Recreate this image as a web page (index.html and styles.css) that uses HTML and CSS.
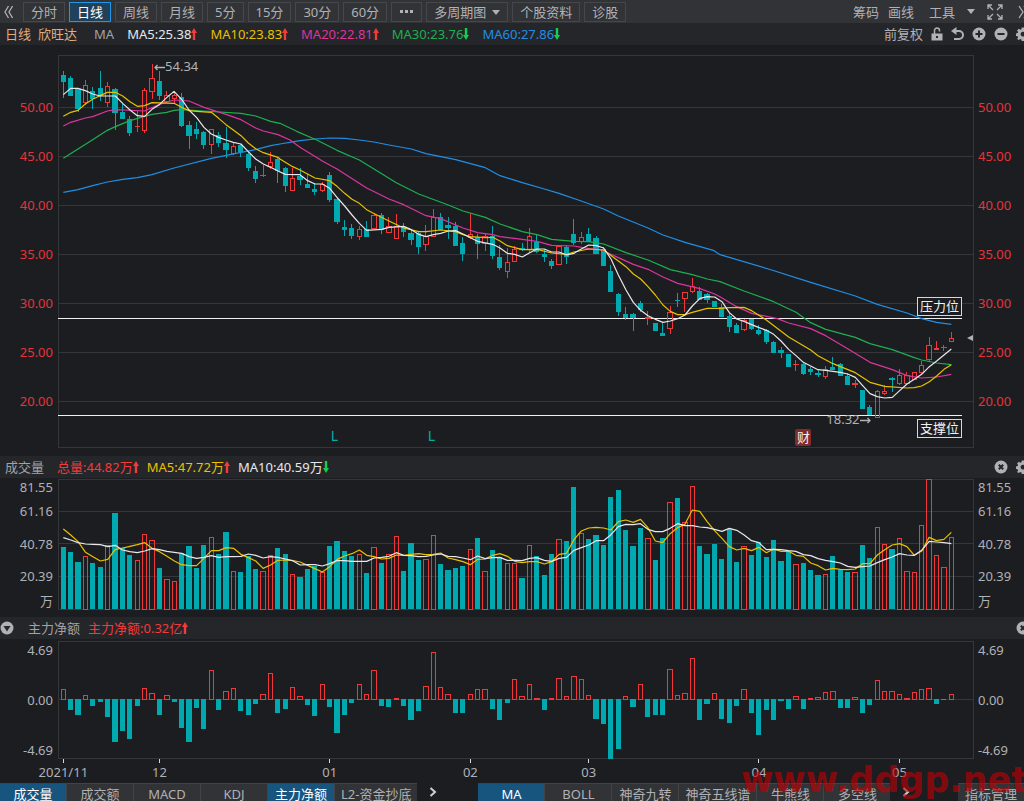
FILE: index.html
```html
<!DOCTYPE html>
<html lang="zh-CN">
<head>
<meta charset="utf-8">
<meta name="viewport" content="width=device-width, initial-scale=1">
<title>欣旺达 日线</title>
<link rel="stylesheet" href="styles.css">
<script src="chart.js" defer></script>
</head>
<body>
<svg class="defs" aria-hidden="true">
  <symbol id="up" viewBox="0 0 6 13"><path d="M3 0L6 5H4.2V12H1.8V5H0Z"/></symbol>
  <symbol id="down" viewBox="0 0 6 13"><path d="M3 12L6 7H4.2V0H1.8V7H0Z"/></symbol>
  <symbol id="gear" viewBox="0 0 14 14"><path fill-rule="evenodd" d="M5.8 0.5h2.4l.4 1.8 1.1.5 1.6-1 1.6 1.6-1 1.6.5 1.1 1.8.4v1.9l-1.8.4-.5 1.1 1 1.6-1.6 1.6-1.6-1-1.1.5-.4 1.8H5.8l-.4-1.8-1.1-.5-1.6 1L1.1 12l1-1.6-.5-1.1L0 8.900V6.500l1.600-.4.5-1.100-1-1.600L2.700 1.800l1.600 1 1.100-.5ZM7 4.700a2.400 2.400 0 1 0 .01 0Z"/></symbol>
  <symbol id="close" viewBox="0 0 14 14"><circle cx="7" cy="7" r="6.500"/><path class="cut" d="M4.800 4.800L9.200 9.200M9.200 4.800L4.800 9.200"/></symbol>
</svg>

<nav class="toolbar">
  <button class="plain" aria-label="收起"><svg width="9" height="14" viewBox="0 0 9 14" class="line"><path d="M4.500 1L1 7L4.500 13M8.500 1L5 7L8.500 13"/></svg></button>
  <div class="periods">
    <button>分时</button>
    <button class="on">日线</button>
    <button>周线</button>
    <button>月线</button>
    <button>5分</button>
    <button>15分</button>
    <button>30分</button>
    <button>60分</button>
    <button class="more" aria-label="更多"><svg width="13" height="3" viewBox="0 0 13 3"><path d="M0 0h3v3H0zM5 0h3v3H5zM10 0h3v3h-3z"/></svg></button>
    <button>多周期图<svg class="caret" width="8" height="5" viewBox="0 0 8 5"><path d="M0 0H8L4 5Z"/></svg></button>
    <button>个股资料</button>
    <button>诊股</button>
  </div>
  <div class="tools">
    <button class="plain">筹码</button>
    <button class="plain">画线</button>
    <button class="plain tool-menu">工具<svg width="8" height="5" viewBox="0 0 8 5"><path d="M0 0H8L4 5Z"/></svg></button>
    <button class="plain expand" aria-label="全屏"><svg width="16" height="16" viewBox="0 0 16 16" class="line"><path d="M1 5V1H5M1 1L6 6M11 1H15V5M15 1L10 6M1 11V15H5M1 15L6 10M11 15H15V11M15 15L10 10"/></svg></button>
    <button class="plain edge" aria-label="展开"><svg width="12" height="14" viewBox="0 0 12 14" class="line"><path d="M1 1L5 7L1 13M6 1L10 7L6 13"/></svg></button>
  </div>
</nav>

<header class="bar">
  <span class="peach">日线</span>
  <span class="peach">欣旺达</span>
  <span class="grey ma">MA</span>
  <div class="values">
    <span class="white">MA5:25.38<svg class="arrow red"><use href="#up"/></svg></span>
    <span class="yellow">MA10:23.83<svg class="arrow red"><use href="#up"/></svg></span>
    <span class="magenta">MA20:22.81<svg class="arrow red"><use href="#up"/></svg></span>
    <span class="green">MA30:23.76<svg class="arrow lime"><use href="#down"/></svg></span>
    <span class="blue">MA60:27.86<svg class="arrow lime"><use href="#down"/></svg></span>
  </div>
  <div class="actions">
    <button class="plain">前复权</button>
    <button class="plain" aria-label="锁定"><svg width="12" height="14" viewBox="0 0 12 14"><path d="M3.500 7V3.500a2.500 2.500 0 0 1 5 0V4.500" fill="none" stroke="currentColor" stroke-width="1.500"/><path fill-rule="evenodd" d="M0.500 6.500h11v7h-11zM5 9v2h2V9z"/></svg></button>
    <button class="plain" aria-label="撤销"><svg width="13" height="14" viewBox="0 0 13 14"><path d="M4 4H8a4 4 0 0 1 0 8H3" fill="none" stroke="currentColor" stroke-width="2"/><path d="M0 4L5.500 0V8Z"/></svg></button>
    <button class="plain" aria-label="放大"><svg width="14" height="14" viewBox="0 0 14 14"><circle cx="7" cy="7" r="6.500"/><path class="cut" d="M7 3.500V10.500M3.500 7H10.500"/></svg></button>
    <button class="plain" aria-label="缩小"><svg width="14" height="14" viewBox="0 0 14 14"><circle cx="7" cy="7" r="6.500"/><path class="cut" d="M3.500 7H10.500"/></svg></button>
    <button class="plain" aria-label="设置"><svg width="14" height="14"><use href="#gear"/></svg></button>
  </div>
</header>

<section class="row price">
  <div class="axis left"><span>50.00</span><span>45.00</span><span>40.00</span><span>35.00</span><span>30.00</span><span>25.00</span><span>20.00</span></div>
  <div class="plot">
    <svg id="price" viewBox="0 0 2745 1176" preserveAspectRatio="none" role="img" aria-label="日线K线图"></svg>
    <span class="note high"><svg width="11" height="7" viewBox="0 0 11 7" class="line"><path d="M11 3.500H1M3.500 1L1 3.500L3.500 6"/></svg>54.34</span>
    <span class="note low">18.32<svg width="11" height="7" viewBox="0 0 11 7" class="line"><path d="M0 3.500H10M7.500 1L10 3.500L7.500 6"/></svg></span>
    <span class="note mark first">L</span>
    <span class="note mark second">L</span>
    <span class="note report">财</span>
    <span class="note level resist">压力位</span>
    <span class="note level support">支撑位</span>
    <svg class="note pointer" width="6" height="6" viewBox="0 0 6 6"><path d="M0 3L6 0V6Z"/></svg>
  </div>
  <div class="axis right"><span>50.00</span><span>45.00</span><span>40.00</span><span>35.00</span><span>30.00</span><span>25.00</span><span>20.00</span></div>
</section>

<header class="bar">
  <span class="grey volume-name">成交量</span>
  <div class="values tight">
    <span class="red">总量:44.82万<svg class="arrow red"><use href="#up"/></svg></span>
    <span class="yellow">MA5:47.72万<svg class="arrow red"><use href="#up"/></svg></span>
    <span class="white">MA10:40.59万<svg class="arrow lime"><use href="#down"/></svg></span>
  </div>
  <div class="actions">
    <button class="plain" aria-label="关闭"><svg width="14" height="14"><use href="#close"/></svg></button>
    <button class="plain" aria-label="设置"><svg width="14" height="14"><use href="#gear"/></svg></button>
  </div>
</header>

<section class="row volume">
  <div class="axis left"><span>81.55</span><span>61.16</span><span>40.78</span><span>20.39</span><span>万</span></div>
  <div class="plot"><svg id="volume" viewBox="0 0 2745 390" preserveAspectRatio="none" role="img" aria-label="成交量"></svg></div>
  <div class="axis right"><span>81.55</span><span>61.16</span><span>40.78</span><span>20.39</span><span>万</span></div>
</section>

<header class="bar flow-bar">
  <button class="plain" aria-label="切换指标"><svg width="14" height="14" viewBox="0 0 14 14"><circle cx="7" cy="7" r="6.500"/><path class="hole" d="M3.500 5H10.500L7 10.500Z"/></svg></button>
  <span class="grey">主力净额</span>
  <span class="red">主力净额:0.32亿<svg class="arrow red"><use href="#up"/></svg></span>
  <div class="actions">
    <button class="plain" aria-label="关闭"><svg width="14" height="14"><use href="#close"/></svg></button>
  </div>
</header>

<section class="row flow">
  <div class="axis left"><span>4.69</span><span>0.00</span><span>-4.69</span></div>
  <div class="plot"><svg id="flow" viewBox="0 0 2745 351" preserveAspectRatio="none" role="img" aria-label="主力净额"></svg></div>
  <div class="axis right"><span>4.69</span><span>0.00</span><span>-4.69</span></div>
</section>
<div class="row dates"><svg id="dates" role="img" aria-label="日期"></svg></div>

<footer class="tabs">
  <div class="group">
    <button class="on">成交量</button>
    <button>成交额</button>
    <button>MACD</button>
    <button>KDJ</button>
    <button class="on">主力净额</button>
    <button class="wide">L2-资金抄底</button>
  </div>
  <button class="next" aria-label="更多副图指标"><svg width="8" height="10" viewBox="0 0 8 10"><path d="M1.500 1L6 5L1.500 9"/></svg></button>
  <div class="group main-tabs">
    <button class="on">MA</button>
    <button>BOLL</button>
    <button>神奇九转</button>
    <button class="wide">神奇五线谱</button>
    <button>牛熊线</button>
    <button>多空线</button>
  </div>
  <button class="next" aria-label="更多主图指标"><svg width="8" height="10" viewBox="0 0 8 10"><path d="M1.500 1L6 5L1.500 9"/></svg></button>
  <div class="group manage"><button>指标管理</button></div>
</footer>
<div class="watermark">www.ddgp.net</div>
</body>
</html>
```
FILE: styles.css
```css
* { box-sizing: border-box; }

body {
  margin: 0;
  min-height: 100vh;
  position: relative;
  overflow: hidden;
  display: flex;
  flex-direction: column;
  background: #1c1d21;
  color: #b0b1b4;
  font: 13px/20px "Noto Sans", "Noto Sans CJK SC", sans-serif;
  white-space: nowrap;
}

button {
  margin: 0;
  padding: 0;
  border: 0;
  background: none;
  color: inherit;
  font: inherit;
  white-space: nowrap;
}

svg { fill: currentColor; }
.defs { position: absolute; width: 0; height: 0; }
.line { fill: none; stroke: currentColor; stroke-width: 1.3; }
.cut { fill: none; stroke: #25262a; stroke-width: 2; }
.hole { fill: #25262a; }
.plain { display: flex; align-items: center; flex: none; }

.white { color: #e8e8ea; }
.grey { color: #a2a3a7; }
.peach { color: #e5ad7c; }
.yellow { color: #e8c100; }
.magenta { color: #dc359f; }
.green { color: #1cb04f; }
.blue { color: #1f8fe6; }
.red { color: #f53a3a; }
.lime { color: #12cf52; }

/* Period toolbar */
.toolbar {
  display: flex;
  align-items: center;
  flex: none;
  height: 23px;
  padding-left: 4px;
  background: #323337;
}
.periods { display: flex; gap: 4px; margin-left: 10px; }
.periods button {
  height: 20px;
  padding: 0 7px;
  border: 1px solid #46474b;
  line-height: 18px;
}
.periods .on { background: #20415a; border-color: #2196e8; color: #fff; }
.periods .more { padding: 0 8px; }
.periods .more svg { display: block; }
.caret { margin: 0 0 2px 6px; }
.tools { display: flex; align-items: center; margin-left: auto; gap: 9px; }
.tool-menu { gap: 12px; margin-left: 6px; }
.expand { margin-left: 3px; }
.edge { margin: 0 -6px 0 6px; }

/* Indicator bars */
.bar {
  display: flex;
  align-items: center;
  flex: none;
  height: 22px;
  padding-left: 5px;
  background: #25262a;
  gap: 7px;
}
.ma { margin-left: 10px; }
.values { display: flex; gap: 13px; margin-left: 6px; }
.values.tight { gap: 8px; }
.arrow { width: 6px; height: 13px; vertical-align: -2px; }
.actions { display: flex; gap: 8px; margin: 0 -6px 0 auto; }
.flow-bar { padding-left: 0; gap: 8px; }
.flow-bar > .plain { margin-right: 6px; }

/* Charts */
.row {
  display: grid;
  grid-template-columns: 58px minmax(0, 1fr) 51px;
  flex: none;
}
.price { padding: 10px 0 9px; }
.volume { padding: 1px 0 8px; }
.flow { padding-top: 2px; }
.plot { position: relative; }
.plot > svg:first-child { display: block; width: 100%; overflow: visible; }
#price { height: 392px; }
#volume { height: 130px; }
#flow { height: 117px; }

.axis { display: grid; align-content: start; }
.axis.left { padding-right: 5px; text-align: right; }
.axis.right { padding-left: 5px; }
.price .axis { grid-auto-rows: 49px; line-height: 49px; padding-top: 28px; color: #e5343a; }
.volume .axis { grid-template-rows: 16px 32px 33px 32px 17px; align-items: center; }
.flow .axis { grid-template-rows: 17px 84px 16px; align-items: center; }

.dates { height: 25px; }
#dates { grid-column: 2; width: 100%; height: 25px; overflow: visible; }
#dates line { stroke: #d8d8da; stroke-width: 1; shape-rendering: crispEdges; }

#price *, #volume *, #flow * { vector-effect: non-scaling-stroke; }
.grid { stroke: #35363a; shape-rendering: crispEdges; fill: none; }
.rise { stroke: #f0383a; fill: none; shape-rendering: crispEdges; }
.fall { stroke: none; fill: #00a8b0; shape-rendering: crispEdges; }
.wick { stroke: #00a8b0; shape-rendering: crispEdges; }
.wick.up { stroke: #f0383a; }
.level-line { stroke: #f0f0f2; shape-rendering: crispEdges; }
.curve { fill: none; stroke: currentColor; stroke-width: 1.2; stroke-linejoin: round; }

/* Annotations over the price plot */
.note { position: absolute; line-height: 18px; }
.high { left: 10.5%; top: 2px; }
.low { right: 11.2%; top: 355px; }
.mark { top: 372px; font-size: 14px; color: #00b0a8; }
.first { left: 29.8%; }
.second { left: 40.4%; }
.report {
  left: 80.6%;
  top: 374px;
  width: 16px;
  height: 17px;
  border-radius: 2px;
  background: #7f2a2d;
  color: #f0f0f2;
  text-align: center;
  line-height: 16px;
}
.level {
  right: 11px;
  height: 19px;
  padding: 0 2px;
  border: 1px solid #d8d8da;
  background: #1c1d21;
  color: #f0f0f2;
  line-height: 17px;
}
.resist { top: 242px; }
.support { top: 364px; }
.pointer { right: 0; top: 280px; }

/* Indicator tabs */
.tabs {
  display: flex;
  flex: none;
  height: 18px;
  background: #1c1d21;
  line-height: 20px;
}
.group { display: flex; gap: 1px; background: #424347; }
.group button {
  width: 66px;
  height: 18px;
  border-top: 1px solid #424347;
  background: #323337;
}
.group .wide { width: auto; padding: 0 6px; }
.group .on { background: #17557f; color: #fff; }
.next { width: 32px; padding: 0; }
.next svg { display: block; margin: 0 auto; fill: none; stroke: #d0d0d2; stroke-width: 2; }
.main-tabs { margin-left: 29px; }
.manage { margin-left: auto; }

.watermark {
  position: absolute;
  right: -4px;
  bottom: 0;
  color: rgba(190, 0, 4, 0.65);
  font: bold 35px/42px "DejaVu Sans", sans-serif;
  pointer-events: none;
}
```
FILE: chart.js
```js
const NS = "http://www.w3.org/2000/svg";
const WIDTH = 2745;
const BAR = 15;
const center = i => 16 + 22.2 * i;

function add(parent, name, attrs, text) {
  const el = document.createElementNS(NS, name);
  for (const key in attrs) el.setAttribute(key, attrs[key]);
  if (text) el.textContent = text;
  parent.appendChild(el);
  return el;
}
function frame(svg, height, lines) {
  for (const y of lines) add(svg, "line", { class: "grid", x1: 0, x2: WIDTH, y1: y, y2: y });
  add(svg, "rect", { class: "grid", x: 0, y: 0, width: WIDTH, height });
}
function bar(svg, i, rising, top, bottom) {
  const x = center(i) - BAR / 2;
  if (rising) add(svg, "rect", { class: "rise", x: x + 1, y: top, width: BAR - 2, height: Math.max(bottom - top - 1, 1) });
  else add(svg, "rect", { class: "fall", x: x - 1, y: top, width: BAR + 1, height: Math.max(bottom - top, 3) });
}
function curve(svg, color, points) {
  add(svg, "polyline", { class: "curve " + color, points: points.join(" ") });
}

/* Candles: direction, high, body top, body bottom, low; grouped with a vertical base. */
const candleGroups = [
  [-15, `c63,75,96,143 c78,84,137,137 c118,118,177,185 r90,107,157,165 c110,122,147,177 c63,115,137,153
    r97,110,157,170 c115,117,188,240 c163,186,208,208 c197,208,248,258 r182,228,231,245 r113,120,242,248
    r43,85,125,147 c63,94,137,150 r123,135,155,158 r125,135,147,160 c130,142,227,230 c213,225,258,297
    c217,237,252,268 c243,246,284,297 r237,238,284,313 c247,255,279,290 c230,278,299,325 r278,289,310,315
    c282,285,307,322 c305,312,353,363 c348,363,388,398 r345,375,378,380 r307,337,350,358 c320,327,362,398`],
  [255, `c81,84,137,157 r85,114,152,152 c84,109,120,135 c102,131,144,144 c129,147,156,166 r125,134,152,157
    c96,106,179,185 c170,177,245,251 c239,261,270,287 c252,264,287,296 r258,269,290,299 c243,267,290,290
    r222,225,267,267 c220,224,270,281 r231,258,279,279 r222,258,295,295 c249,261,276,290 c270,278,299,315
    c275,279,321,341 r255,288,315,333 r208,231,291,291 c220,230,269,269 c230,255,263,296 c246,258,318,318
    c291,309,341,363 r222,284,292,296 c281,290,311,356 r281,290,311,333 c257,288,347,356 c315,351,384,391
    r324,367,394,413 r318,328,364,364`],
  [435, `c129,145,151,153 r85,108,150,157 c104,126,157,159 c147,162,170,186 c176,183,197,207 r139,140,193,193
    c136,140,170,192 c56,103,128,134 r97,112,124,132 c85,103,126,126 c107,114,161,163 c141,148,198,198
    c195,213,275,275 c280,283,337,347 c322,342,354,361 c339,342,355,392 c303,310,331,337 r333,351,355,376
    c369,370,392,392 c368,399,407,407 r319,337,385,402 c279,300,304,321 r275,277,296,337 r234,260,275,279
    c261,272,300,300 c280,283,299,310 c303,304,322,322 c313,320,350,350 c339,348,381,396 c369,376,398,398`],
  [645, `r147,150,178,183 c147,148,177,180 c166,180,191,195 c178,180,216,222 c213,217,248,248 c232,240,249,264
    c252,253,290,290 r270,282,285,302 c280,282,312,315 c292,297,305,315 c300,309,314,321 r288,298,320,327
    c261,290,299,299 c280,282,317,317 c308,317,344,344 r330,341,344,353 c360,361,416,416 c404,411,435,435
    r360,364,443,443 r345,364,371,376 c321,325,330,366 r298,317,340,344 r305,317,342,342 r307,308,328,330
    r273,287,308,312 r201,227,270,273 r213,234,238,240 r225,232,234,243 r185,206,216,216`]
];
const candles = candleGroups.flatMap(([base, rows]) => rows.trim().split(/\s+/).map(row => ({
  rising: row[0] === "r",
  y: row.slice(1).split(",").map(v => Number(v) + base)
})));

/* Moving averages: one list of x,y points per section of the plot. */
const sections = [[-24, -15], [666, 255], [1326, 435], [1986, 645]];
const averages = {
  blue: [
    "40,427 84,419 128,407 172,396 218,388 262,383 306,374 372,354 484,325 573,307 617,299 662,287",
    "0,12 60,2 105,-3 150,-6 194,-5 238,0 282,6 327,15 394,27 438,41 527,59 616,83",
    "0,-73 67,-52 133,-33 177,-20 235,0 311,27 355,48 444,84 489,105 555,127 640,151",
    "0,-46 155,0 272,37 406,78 472,103 561,129 605,146 650,157 694,163"],
  green: [
    "40,325 84,297 128,269 172,241 196,230 240,212 284,199 306,193 350,187 372,181 395,179 462,183 573,190 617,198 662,214",
    "0,-50 50,-26 110,0 171,31 238,60 349,128 416,162 505,195 549,213 616,232",
    "0,72 67,95 111,104 155,118 222,124 266,125 311,132 378,158 444,180 511,209 577,224 622,237",
    "0,35 72,63 161,95 228,127 272,158 317,178 406,202 450,221 517,239 583,263 605,270 650,279 694,284"],
  magenta: [
    "40,228 62,217 106,204 128,200 172,183 196,179 284,183 328,163 372,150 417,153 462,172 528,193 573,209 617,234 640,243 684,254",
    "30,0 60,22 127,63 171,87 260,144 327,177 371,194 438,227 482,236 549,264 593,278 638,284",
    "0,110 44,115 111,124 155,136 222,138 266,146 289,147 311,153 355,173 400,193 444,208 489,231 533,250 600,266 644,282",
    "0,80 50,110 95,130 172,146 206,159 272,176 317,197 383,236 450,277 517,299 561,317 605,324 650,321 694,313"],
  yellow: [
    "40,199 62,187 84,181 106,162 128,148 150,137 172,127 196,127 218,138 240,155 262,169 284,167 306,158 372,160 395,172 417,182 440,184 484,187 506,205 528,224 550,240 573,257 595,279 617,296 640,308 684,322",
    "0,57 38,80 60,90 105,114 149,122 171,139 194,160 216,178 238,190 260,209 283,221 327,243 371,264 416,275 438,275 482,270 527,275 549,284 571,290 616,293 638,292",
    "0,123 22,137 67,149 111,148 155,159 200,163 222,156 266,147 311,150 355,183 378,200 400,222 422,237 444,260 466,285 489,315 511,334 533,344 555,344 577,337 622,325",
    "0,115 28,113 72,112 95,122 139,150 206,201 272,240 294,257 339,281 406,308 450,337 494,349 561,354 583,353 605,348 628,335 650,318 672,298 694,284"],
  white: [
    "40,134 62,115 84,115 106,122 128,132 150,138 196,138 218,160 240,180 262,197 284,199 306,178 328,164 350,143 372,124 395,148 417,180 440,203 462,232 484,252 506,262 528,270 550,277 573,282 595,305 617,327 640,342 662,352 684,363",
    "16,103 60,104 83,122 105,132 127,132 149,145 171,172 194,198 216,225 238,250 260,271 305,268 327,262 371,259 394,269 416,283 438,290 460,284 482,280 505,273 527,272 549,282 571,293 593,304 638,313",
    "0,144 22,160 44,163 67,171 89,158 111,147 133,147 155,156 177,156 200,165 222,160 244,147 266,135 289,137 311,144 333,177 355,225 378,270 400,307 422,331 444,347 466,358 489,367 511,363 533,356 555,345 577,318 600,295 622,290 644,291",
    "6,95 28,128 50,147 72,154 95,164 117,173 139,181 161,193 183,213 206,238 228,257 250,277 272,288 294,299 317,301 361,307 383,312 406,322 428,347 450,371 472,380 494,384 517,382 539,362 561,342 583,328 605,313 628,290 650,273 672,255 694,237"]
};

const price = document.getElementById("price");
frame(price, 1176, [157, 304, 451, 598, 745, 892, 1039]);
for (const y of [790, 1081]) add(price, "line", { class: "level-line", x1: 0, x2: 2712, y1: y, y2: y });
candles.forEach(({ rising, y: [high, top, bottom, low] }, i) => {
  const x = center(i);
  const cls = rising ? "wick up" : "wick";
  add(price, "line", { class: cls, x1: x, x2: x, y1: high, y2: top });
  add(price, "line", { class: cls, x1: x, x2: x, y1: bottom, y2: low });
  bar(price, i, rising, top, bottom);
});
for (const color in averages) {
  curve(price, color, averages[color].flatMap((list, s) => list.split(" ").map(p => {
    const [x, y] = p.split(",").map(Number);
    return (x + sections[s][0]) + "," + (y + sections[s][1]);
  })));
}

/* Per-bar series: [base, values] groups in bar order. */
const expand = groups => groups.flatMap(([base, values]) => values.map(v => v + base));
const volumeTops = expand([
  [-72, [277,292,321,304,324,337,271,175,279,299,316,237,256,340,373,379,294,273,340,270,246,296,232,348,352,303,343,348,300,280,296,357,366,343,333,352,273]],
  [-27, [213,244,258,252,308,233,279,252,198,304,219,270,268,195,282,300,294,288,239,204,303,240,262,280,280,323,227,258,315,251,208,213,51,189,207,194,225,82,60,181,228,175,205,270,204]],
  [-72, [142,130,203,94,273,296,267,312,222,321,274,300,261,306,255,318,288,328,324,346,360,358,303,345,350,352,270,309,217,268,282,250,348,352,211,72,300,336,247]]
]);
const volumeFast = expand([
  [-72, [222,240,260,292,305,318,313,284,279,274,269,263,280,290,304,318,329,332,332,310,287,287,278,280,298,308,318,340,330,316,315,317,321,331,341,351,335]],
  [-27, [268,258,251,240,256,260,267,265,255,256,253,251,254,253,249,264,269,275,284,268,267,256,251,259,274,278,275,275,282,275,253,250,209,183,174,172,174,180,155,150,157,148,173,213,218]],
  [-72, [236,218,208,165,169,200,227,250,275,285,280,287,277,293,282,289,289,301,304,324,332,345,340,343,344,342,326,326,300,284,270,266,275,301,288,247,257,253,232]]
]);
const volumeSlow = expand([
  [-72, [248,255,263,267,268,269,275,271,285,290,293,288,281,284,289,292,295,305,310,307,302,307,305,305,304,297,301,309,305,307,312,317,330,329,329,333,326]],
  [-27, [272,272,274,274,274,264,262,259,248,256,257,260,259,255,252,259,260,264,269,258,266,263,262,271,271,272,265,263,271,274,265,262,241,233,225,212,212,194,170,163,164,161,178,185,185]],
  [-72, [220,206,212,212,216,218,223,229,220,226,240,257,263,284,283,284,287,289,299,302,311,316,320,324,334,337,335,333,323,314,306,296,300,301,286,259,261,263,266]]
]);
const volume = document.getElementById("volume");
frame(volume, 390, [96, 193, 291]);
volumeTops.forEach((top, i) => bar(volume, i, candles[i].rising, top, 391));
curve(volume, "yellow", volumeFast.map((y, i) => center(i) + "," + y));
curve(volume, "white", volumeSlow.map((y, i) => center(i) + "," + y));

const netFlow = [30,-34,-50,12,-22,-10,-54,-130,-98,-121,-22,33,18,-48,12,-10,-89,-130,-28,-92,88,-35,24,33,-38,-48,-16,15,78,-44,-32,37,9,-20,-51,46,-26,
  -104,-50,-13,46,15,88,-22,-25,3,-22,-63,-38,40,142,37,15,-44,-44,15,31,31,-31,-64,-13,60,10,46,5,-34,5,63,10,69,60,12,-60,-76,-180,-152,10,-25,46,-54,-48,-48,
  91,13,19,124,-64,-16,19,-61,-73,-22,31,-44,-108,-35,-64,-7,-32,10,-32,3,6,22,25,-29,-29,6,-44,-20,58,25,25,16,3,22,31,34,-16,-4,16];
const flow = document.getElementById("flow");
frame(flow, 351, [174]);
netFlow.forEach((v, i) => v > 0 ? bar(flow, i, true, 176 - v, 176) : bar(flow, i, false, 173, 173 - v));

const dates = document.getElementById("dates");
[[0, "2021/11"], [13, "12"], [36, "01"], [55, "02"], [71, "03"], [94, "04"], [113, "05"]].forEach(([i, label]) => {
  const x = center(i) / WIDTH * 100 + "%";
  add(dates, "line", { x1: x, x2: x, y1: 0, y2: 5 });
  add(dates, "text", { x, y: 19, "text-anchor": "middle" }, label);
});
```
